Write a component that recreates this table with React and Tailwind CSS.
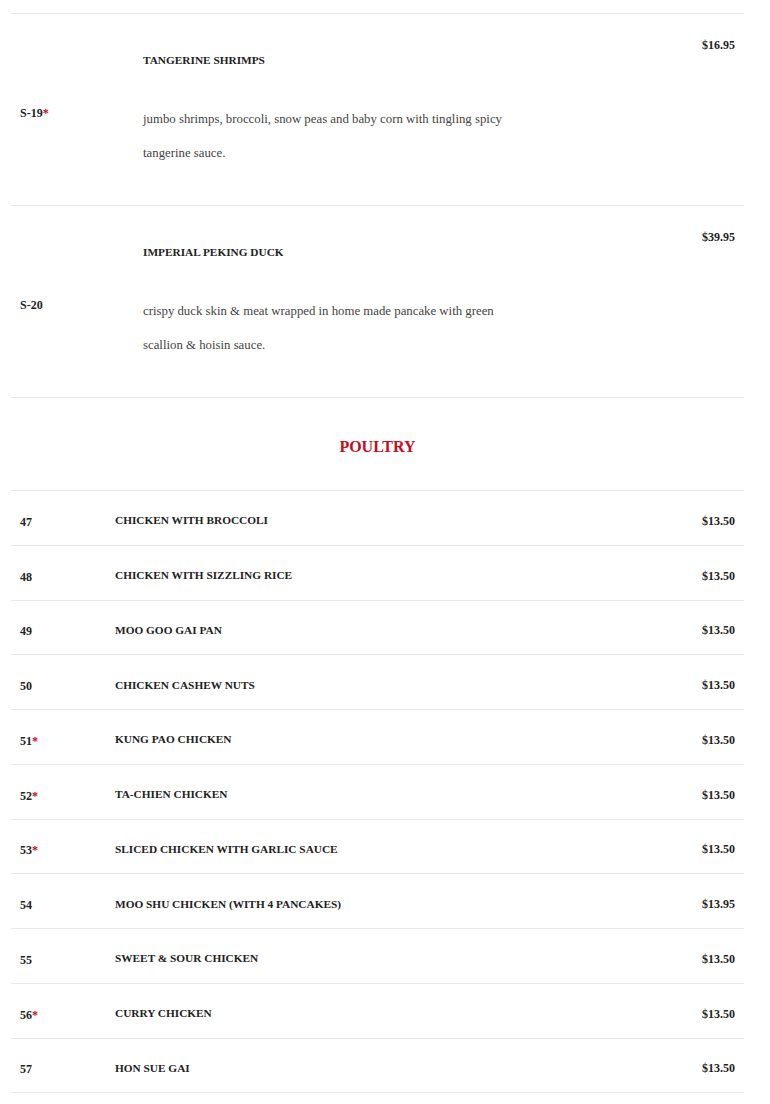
import React from 'react';

const specials = [
  {
    num: 'S-19',
    hot: true,
    name: 'TANGERINE SHRIMPS',
    lines: ['jumbo shrimps, broccoli, snow peas and baby corn with tingling spicy', 'tangerine sauce.'],
    price: '$16.95',
  },
  {
    num: 'S-20',
    hot: false,
    name: 'IMPERIAL PEKING DUCK',
    lines: ['crispy duck skin & meat wrapped in home made pancake with green', 'scallion & hoisin sauce.'],
    price: '$39.95',
  },
];

const poultry = [
  ['47', false, 'CHICKEN WITH BROCCOLI', '$13.50'],
  ['48', false, 'CHICKEN WITH SIZZLING RICE', '$13.50'],
  ['49', false, 'MOO GOO GAI PAN', '$13.50'],
  ['50', false, 'CHICKEN CASHEW NUTS', '$13.50'],
  ['51', true, 'KUNG PAO CHICKEN', '$13.50'],
  ['52', true, 'TA-CHIEN CHICKEN', '$13.50'],
  ['53', true, 'SLICED CHICKEN WITH GARLIC SAUCE', '$13.50'],
  ['54', false, 'MOO SHU CHICKEN (WITH 4 PANCAKES)', '$13.95'],
  ['55', false, 'SWEET & SOUR CHICKEN', '$13.50'],
  ['56', true, 'CURRY CHICKEN', '$13.50'],
  ['57', false, 'HON SUE GAI', '$13.50'],
];

function Num({ num, hot }) {
  return (
    <span className="text-[12px] font-bold text-[#222]">
      {num}
      {hot && <span className="text-[#d0021b]">*</span>}
    </span>
  );
}

export default function App() {
  return (
    <div
      className="w-[770px] bg-white pt-[13px] text-[#222]"
      style={{ fontFamily: '"Liberation Serif", "DejaVu Serif", serif' }}
    >
      <div className="ml-[11px] w-[733px] border-t border-[#e8e8e8]">
        {specials.map((s) => (
          <div key={s.num} className="flex h-[192px] border-b border-[#e8e8e8] px-[9px]">
            <div className="flex w-[123px] items-center pt-[6px]">
              <Num num={s.num} hot={s.hot} />
            </div>
            <div className="flex-1 pt-[29px]">
              <p className="text-[11.3px] font-bold leading-[34px] text-[#222]">{s.name}</p>
              <div className="mt-[25px] text-[12.8px] leading-[34px] text-[#444]">
                {s.lines.map((l) => (
                  <p key={l} className="whitespace-nowrap">{l}</p>
                ))}
              </div>
            </div>
            <div className="pt-[21px]">
              <p className="text-[12px] font-bold leading-[20px]">{s.price}</p>
            </div>
          </div>
        ))}

        <div className="flex h-[93px] items-center justify-center border-b border-[#e8e8e8] pt-[6px]">
          <h2 className="text-[16px] font-bold text-[#c40d1e]">POULTRY</h2>
        </div>

        {poultry.map(([num, hot, name, price]) => (
          <div
            key={num}
            className="box-border flex h-[54.75px] items-center border-b border-[#e8e8e8] px-[9px] pt-[6px]"
          >
            <div className="w-[95px]">
              <Num num={num} hot={hot} />
            </div>
            <p className="flex-1 text-[11.3px] font-bold">{name}</p>
            <p className="text-[12px] font-bold">{price}</p>
          </div>
        ))}
      </div>
    </div>
  );
}
